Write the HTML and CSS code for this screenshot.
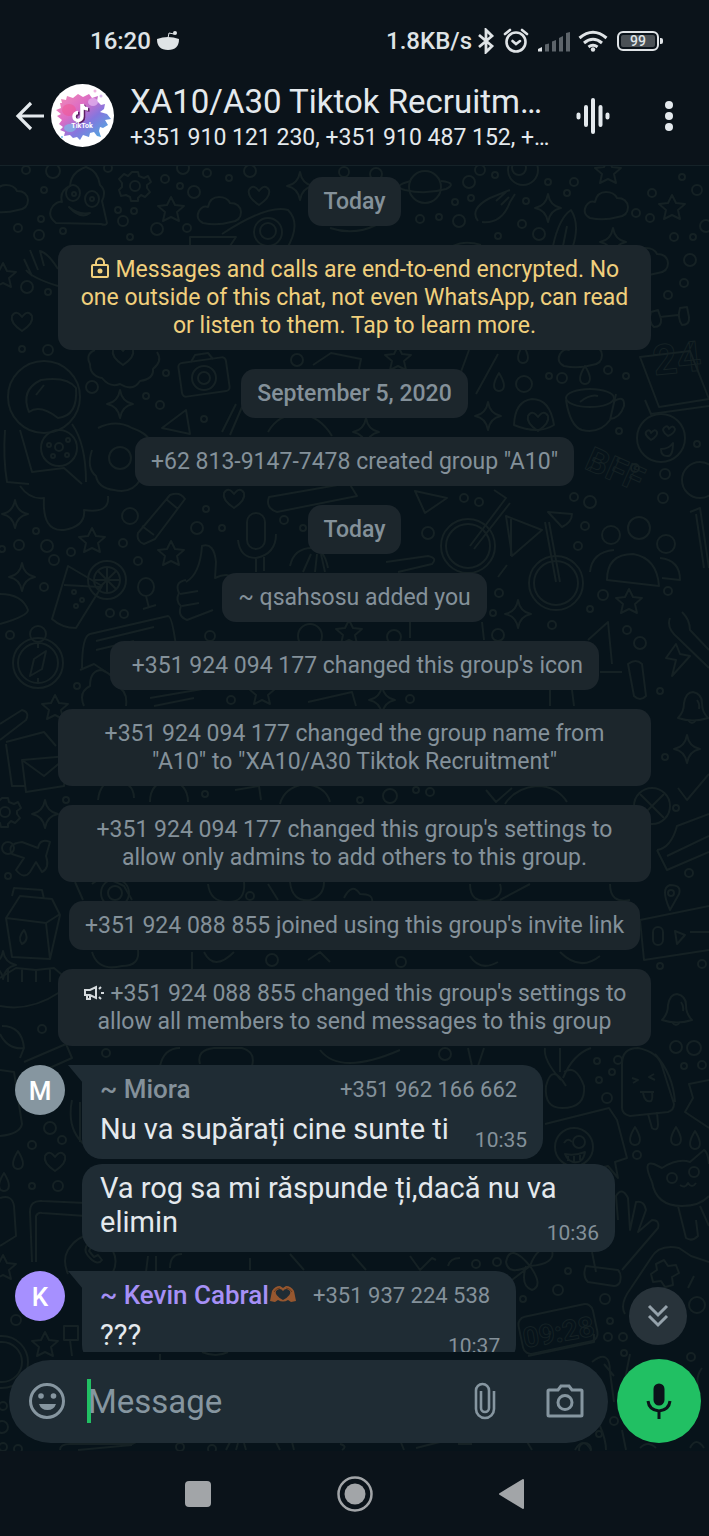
FILE: index.html
```html
<!DOCTYPE html>
<html lang="en">
<head>
    <meta charset="UTF-8">
    <meta name="viewport" content="width=device-width, initial-scale=1">
    <title>XA10/A30 Tiktok Recruitment</title>
    <link rel="stylesheet" href="styles.css">
</head>
<body>

<div class="status-bar">
    <span>16:20</span>
    <svg class="bowl" width="22" height="20" viewBox="0 0 22 20" aria-hidden="true">
        <path d="M0 8q11-4 22 0q0 11-11 11T0 8z" fill="currentColor"/>
        <path d="M11 7l1-5 5 1" fill="none" stroke="currentColor"/>
        <circle cx="18" cy="2" r="2" fill="currentColor"/>
    </svg>
    <span class="speed">1.8KB/s</span>
    <svg class="bluetooth" width="18" height="26" viewBox="0 0 18 26" fill="none" stroke="currentColor" stroke-width="2.8" aria-hidden="true">
        <path d="M2 7l13 11-6 6V2l6 6L2 19"/>
    </svg>
    <svg class="alarm" width="26" height="26" viewBox="0 0 26 26" fill="none" stroke="currentColor" stroke-width="2.6" stroke-linecap="round" aria-hidden="true">
        <circle cx="13" cy="14" r="9.5"/>
        <path d="M2 6l5-4M24 6l-5-4M9.500 13l3.500 3 4-3"/>
    </svg>
    <svg class="signal" width="32" height="21" viewBox="0 0 32 21" aria-hidden="true">
        <path d="M0 20.500v-2.500l4-2v4.500z" fill="currentColor"/>
        <path d="M7 20.500v-7l4-1v8zM14 20.500v-10l4-1.500v11.500zM21 20.500V7l4-2v15.500zM28 20.500V2l4-1v19.500z" fill="#5d646a"/>
    </svg>
    <svg class="wifi" width="30" height="22" viewBox="0 0 30 22" fill="none" stroke="currentColor" stroke-width="3" aria-hidden="true">
        <path d="M1.500 8Q15-3.500 28.500 8M6 13q9-7.500 18 0M10.500 17q4.500-3.500 9 0"/>
        <circle cx="15" cy="19.500" r="2.200" fill="currentColor" stroke="none"/>
    </svg>
    <span class="battery">99</span>
</div>

<header class="chat-header">
    <button class="icon-btn back" aria-label="Back">
        <svg width="30" height="30" viewBox="0 0 30 30" fill="none" stroke="currentColor" stroke-width="3.200"><path d="M29 15H3M16 2L3 15l13 13"/></svg>
    </button>
    <svg class="group-icon" width="63" height="63" viewBox="0 0 63 63" aria-hidden="true">
        <defs>
            <linearGradient id="splash" x1="0" y1="0" x2="1" y2="1">
                <stop offset="0" stop-color="#f58fb5"/>
                <stop offset=".35" stop-color="#dc6cc4"/>
                <stop offset=".6" stop-color="#8576de"/>
                <stop offset="1" stop-color="#3fbbe0"/>
            </linearGradient>
        </defs>
        <circle cx="31.500" cy="31.500" r="31.500" fill="#fff"/>
        <path d="M11 19l-1-4 5 1 1-4 6 2 5-4 5 3 6-3 3 4 6-2-1 5 4 4 4-1-1 5-4 3 7 2 4 5-6 1 3 5-5 3-3-1-1 4 2 6-4-1-3-4-4 1-1 4-6-2-3 5-3-3-4 1-3-3-6 1 1-4-5-2 3-3-4-3 3-4-5-4 4-2-5-4 5-2-1-5z" fill="url(#splash)"/>
        <ellipse cx="18" cy="26" rx="7" ry="6" fill="#f4528d" opacity=".5"/>
        <ellipse cx="42" cy="18" rx="5" ry="4" fill="#e6b8f2" opacity=".7"/>
        <ellipse cx="19" cy="44" rx="6" ry="4" fill="#7bbbe8" opacity=".7"/>
        <circle cx="44" cy="7" r="1.500" fill="#efb4e0"/>
        <circle cx="50" cy="12" r="1.500" fill="#d9b8f0"/>
        <circle cx="11" cy="53" r="1" fill="#74c4ea"/>
        <path d="M31 20v12.500a4 4 0 1 1-4-4M31 20q1 5 6 5" transform="translate(1.500 1)" fill="none" stroke="#5c1e63" stroke-width="3.500"/>
        <path d="M31 20v12.500a4 4 0 1 1-4-4M31 20q1 5 6 5" fill="none" stroke="#fff" stroke-width="3.500"/>
        <text x="31" y="44" class="icon-name">TikTok</text>
    </svg>
    <div class="chat-title">
        <h1>XA10/A30 Tiktok Recruitm…</h1>
        <p>+351 910 121 230, +351 910 487 152, +…</p>
    </div>
    <button class="icon-btn voice" aria-label="Voice chat">
        <svg width="34" height="38" viewBox="0 0 34 38" stroke="currentColor" stroke-width="4" stroke-linecap="round"><path d="M2.500 17.500v3M10 10v18M17 3v32M24.500 10v18M31.500 17.500v3"/></svg>
    </button>
    <button class="icon-btn menu" aria-label="More options">
        <svg width="8" height="30" viewBox="0 0 8 30" fill="currentColor"><circle cx="4" cy="4" r="4"/><circle cx="4" cy="15" r="4"/><circle cx="4" cy="26" r="4"/></svg>
    </button>
</header>

<main class="chat">
    <svg class="wallpaper" viewBox="0 166 709 1285" preserveAspectRatio="xMidYMin slice" aria-hidden="true">
        <defs>
            <path id="star" d="M0-12L4-4l9 1-7 6 2 9-8-4-8 4 2-9-7-6 9-1z"/>
            <path id="sparkle" d="M0-14Q2-2 13 0 2 2 0 14-2 2-13 0-2-2 0-14z"/>
            <path id="heart" d="M0 10Q-12 2-10-5-6-12 0-4 6-12 10-5 12 2 0 10z"/>
            <path id="cloud" d="M-16 12q-8-4-4-12 4-6 9-4 2-10 11-10 8 0 11 6 10 0 11 9 0 9-10 10-14 4-28 1z"/>
            <path id="drop" d="M0-9Q8 4 3 8q-3 2-6 0Q-8 4 0-9z"/>
            <g id="gear"><circle r="5"/><path d="M-3-14h6l1 4 5 2 4-2 3 6-4 3v3l3 4-5 5-4-2-3 3v3h-7l-1-4-4-2-5 1-2-6 3-3v-4l-3-4 5-5 4 2z"/></g>
            <g id="bell"><path d="M-14 10q6-6 6-15 2-11 9-11 9 2 9 11 0 9 6 15-15 5-30 0z"/><path d="M-4 12q4 6 8 0M5-8q3 4 2 9"/></g>
        </defs>

        <!-- food, clouds, planets -->
        <use href="#cloud" x="6" y="199"/><use href="#cloud" x="219" y="211"/><use href="#cloud" x="606" y="206"/><use href="#cloud" x="580" y="354"/>
        <use href="#cloud" x="646" y="262"/><use href="#gear" x="135" y="186"/><use href="#gear" x="5" y="812"/>
        <use href="#star" x="171" y="209"/><use href="#star" x="608" y="171"/><use href="#star" x="672" y="207"/><use href="#star" x="3" y="275"/>
        <use href="#star" x="92" y="540"/><use href="#star" x="171" y="553"/><use href="#star" x="629" y="601"/><use href="#star" x="349" y="632"/>
        <use href="#star" x="55" y="707"/><use href="#star" x="45" y="1344"/><use href="#star" x="3" y="1267"/><use href="#star" x="398" y="358"/><use href="#star" x="262" y="692"/>
        <use href="#sparkle" x="300" y="186"/><use href="#sparkle" x="548" y="208"/><use href="#sparkle" x="613" y="242"/><use href="#sparkle" x="120" y="404"/>
        <use href="#sparkle" x="488" y="416"/><use href="#sparkle" x="15" y="514"/><use href="#sparkle" x="22" y="577"/><use href="#sparkle" x="518" y="614"/>
        <use href="#sparkle" x="687" y="749"/><use href="#sparkle" x="45" y="814"/><use href="#sparkle" x="366" y="432"/><use href="#sparkle" x="382" y="700"/><use href="#sparkle" x="3" y="965"/>
        <use href="#heart" x="259" y="195"/><use href="#heart" x="22" y="321"/><use href="#heart" x="123" y="355"/><use href="#heart" x="234" y="498"/><use href="#heart" x="55" y="1161"/><use href="#heart" x="538" y="421"/>
        <use href="#drop" x="523" y="354"/><use href="#drop" x="499" y="382"/><use href="#drop" x="585" y="375"/><use href="#drop" x="635" y="1136"/>
        <use href="#drop" x="676" y="1136"/><use href="#drop" x="695" y="1140"/><use href="#drop" x="18" y="1160"/><use href="#drop" x="4" y="1182"/>
        <use href="#bell" x="692" y="708"/><use href="#bell" x="676" y="1010"/>

        <path d="M56 223q-10-8-3-17 5-5 9-4-3-11 8-16 1-14 16-19 12 4 14 18 7 6 2 16l5 22q-1 3-6 1z"/>
        <ellipse cx="73" cy="193" rx="7" ry="8"/><ellipse cx="92" cy="199" rx="7" ry="8"/><circle cx="74" cy="194" r="2"/><circle cx="92" cy="199" r="2"/><path d="M69 207q9 8 21 6-9 7-21-6z"/>
        <path d="M190 237h46l-8 12h-38zM222 234q46-30 66-24 14 14-2 40"/><circle cx="268" cy="232" r="14"/><circle cx="268" cy="231" r="8"/>
        <circle cx="425" cy="187" r="16"/><path d="M411 181q-20 5-6 9 20 5 41-1 12-6-5-8M330 228q24 8 46-3"/>
        <circle cx="523" cy="170" r="15"/><circle cx="519" cy="168" r="7"/><path d="M478 221q-9-12 12-23l20-8M482 222q20 2 28-20l5-8M496 201l10-9M501 205l8-8"/>
        <path d="M553 246q6-28 18-36 9 14 2 36M567 226l-4 20M453 246q12-6 28-1"/>
        <path d="M32 276l-8-17M38 270l-8-20M44 266l-4-15q8 2 18 18M26 270q6 8 32 16"/>
        <path d="M95 350q-10 4-5 14 0 12 12 14 8 10 18 6 13 8 20-3 14-2 13-12 10-8 4-17"/>
        <rect x="180" y="360" width="48" height="34" rx="4" transform="rotate(-8 204 377)"/><circle cx="204" cy="378" r="12"/><circle cx="204" cy="378" r="6"/><path d="M191 362l4-7 13-2 5 6"/>
        <circle cx="44" cy="397" r="36"/><path d="M29 412q-9-22 12-32 26-4 35 8 2 28-18 30-18-14-29-6zM36 395l8-10M5 430q-2 28 2 52l22 2M72 424q14 20 14 58M20 430l12 42 32-4 18 16"/>
        <circle cx="59" cy="448" r="18"/><circle cx="59" cy="447" r="4"/><circle cx="49" cy="445" r="2"/><circle cx="68" cy="440" r="2"/><circle cx="67" cy="455" r="2"/><circle cx="53" cy="456" r="2"/>
        <path d="M98 428q18-9 34 0 18 6 20 18M92 450q-6 18 4 26 2 12 18 14 18 4 26-10"/><circle cx="120" cy="458" r="11"/>
        <path d="M162 428l24-18 4 24zM222 432l14-28M230 435l12-28M268 432q10-18 32-18 20 2 32 22M313 365l18-12 30 6-2 10M476 394l22-40M455 388l14-38"/>
        <path d="M640 357l50-6 19 48-50 8zM645 400l6 14 58-8"/><text x="653" y="373" class="doodle-text" font-size="42" transform="rotate(-6 676 360)">24</text>
        <path d="M651 312q-3 10 3 15 8 0 7-8l-3-9zM660 317l18-2M680 308q-3 10 2 17 8 0 7-8l-2-10z"/>
        <ellipse cx="590" cy="398" rx="24" ry="9"/><path d="M566 400q4 26 16 30 18 4 28-10l6-26M613 402q12-8 11 4-4 12-14 13M580 402q10-8 18-6"/>
        <circle cx="661" cy="438" r="24"/><path d="M651 440q-8-6-4-9 3-2 4 2 4-5 6-1 1 4-6 8zM668 436q-8-6-3-9 3-2 4 2 4-5 6 0 0 4-7 7zM661 449q8 0 12-6 0 14-6 13-6 0-6-7zM514 425q1-24 18-26 18 0 22 26-16 10-40 0z"/>
        <text x="584" y="475" class="doodle-text" font-size="34" transform="rotate(24 600 470)">BFF</text><circle cx="700" cy="480" r="18"/>

        <!-- drinks, bike, people -->
        <path d="M138 533l32-38q10-4 15 4l-30 40-11 5q-8-3-6-11zM142 526l12 9M166 499l12 10M269 497l80-14 8 13-80 16q-12-4-8-15zM415 491l32 7-22 15zM20 486q10 14 24 12-2 34 20 32 22-4 20-20 26 4 24-14"/>
        <rect x="247" y="513" width="18" height="36" rx="9"/><path d="M238 540q2 18 18 18 20-4 20-24M256 558v14M264 557v14"/>
        <path d="M186 582q14-8 16-36 12-4 14 16l-1 16q12-6 20 0M186 580q-12 2-7 13-4 8 2 13-4 10 6 14l26-10M180 594l18-3M182 606l17-3"/>
        <path d="M68 566l34 20-26 42q-14 0-24-9zM64 585l36 2"/><circle cx="107" cy="580" r="19"/><circle cx="107" cy="580" r="13"/><path d="M107 567v26M94 580h26M98 571l18 18M116 571l-18 18"/><circle cx="74" cy="592" r="2"/><circle cx="82" cy="600" r="2"/><circle cx="76" cy="606" r="2"/>
        <ellipse cx="146" cy="587" rx="8" ry="9"/><path d="M146 596l3 12M143 609l13-4"/>
        <circle cx="468" cy="546" r="27"/><circle cx="468" cy="546" r="22"/><circle cx="556" cy="583" r="27"/><circle cx="556" cy="583" r="22"/>
        <path d="M470 546l36-48-12-8M474 549l36-46M506 516l36 14-30 26zM511 519v37M545 522l11 60M549 522l11 60M548 512l24 2q0 8-10 13zM507 565l-9 12M386 562l42-6q10 2 4 8l-34 8M290 566q4-18 22-18 12 0 16 20M303 572l8-18M315 572l2-18M325 572l-4-18"/>
        <circle cx="611" cy="535" r="9"/><circle cx="639" cy="528" r="11"/><circle cx="666" cy="544" r="9"/><path d="M607 580q0-26 26-26 24 4 26 32zM590 572q2-20 24-22M660 558q20 2 20 22l-18-2"/>
        <path d="M0 594q22 0 28 16 0 6-28 14M82 668q0-32 8-34l78-18q4 0 8 30M96 641l58-14M96 650l38-9M80 670l14-6 12 8"/>
        <circle cx="38" cy="663" r="25"/><circle cx="38" cy="663" r="20"/><circle cx="38" cy="634" r="8"/><path d="M46 651l-4 18-12 7 4-17zM38 643v5M38 678v5"/>
        <path d="M84 706q-6-14 6-20 0-16 12-16 14 6 14 16 12 4 10 20M150 698l70-12M154 706l40-8M308 702l44-10 4 14M410 622v16M482 622l2 18M588 640l20-18 4 42M628 664q8-6 14 0l4 32q-6 6-12 0zM550 690v16M572 690l2 16M600 672h22"/>
        <path d="M670 618q-4 10 8 20l31 30M682 612q8 8 8 18l19 20M676 644l-10 14 10 2-4 16 18-20-10-2zM690 512l10-4 9 60M696 514l8 54"/>
        <path d="M0 724l22-14q8 2 4 10L0 740M6 742l38-10 12 14M22 760l46-4-4 30-38 6zM22 760l22 16 24-20M6 744l6 42 14 0"/>
        <path d="M98 800q2-18 16-20 20 2 20 18M150 802q0-20 20-22 18 4 18 22M235 790l24-4 2 14M280 804q4-16 24-20 22 2 26 18M486 790l10 12 16-14M505 804q10-16 32-18 20 0 30 16"/>
        <circle cx="652" cy="806" r="18"/><path d="M640 794l24 24M664 794l-24 24M678 788l9 12 22-26"/>

        <!-- milk, shoe, ice cream -->
        <path d="M22 842q-16 2-10 12l12 4-8 12q8 10 14 2l6-10 6 10q8-4 4-16l4-14q-10-4-12 6z"/>
        <path d="M6 918l14-22 32 3 8 16-10 44-38-2zM6 918l40 5 14-9M46 923l4 36M12 896l2-8 28 2 2 9M24 930q6 10-2 14-5-6 2-14z"/>
        <path d="M657 850l10 20 42-18M657 850q14-2 20-24l32-12M667 856l42-20M670 910q-10-22 0-25 12 0 9 9zM640 920l69-14M640 920l4 40 65-10"/><circle cx="671" cy="893" r="3"/><rect x="653" y="927" width="10" height="18" rx="5"/><path d="M675 931l10 4-8 9zM690 932h19"/>
        <path d="M0 978l16-10 20 2 18-2 14 12M8 968v14M22 968v14M36 970v12M50 968v14M0 1006q30 6 60-14M2 1026q20 0 22 22l-4 10M24 1048q-16 2-24-14M24 1062l42-18 6 14-36 16"/>
        <path d="M75 882l8 18M92 884q10-10 32 2l8 14"/><circle cx="115" cy="893" r="14"/><circle cx="115" cy="893" r="7"/><path d="M208 884q2 18 20 18t16-20M268 884l10 16M290 882q2 20 20 18 14-4 14-18M344 898q8-16 16-4 14 0 12 8M470 884q0 20 20 16 14-4 10-16M500 900l30-16M610 884q0 20 20 16"/>
        <path d="M92 952q6 20 30 14 18 0 16-16M192 952v18M204 952q10 20 30 0M308 960l12-8 10 10M470 956q10 16 28 6M560 952q20 20 40 4"/>
        <path d="M160 1066q4-18 20-18M200 1064q-4-14 14-16h28q14 4 10 18M320 1050q20 26 80 0M468 1048l4 18M484 1048l-6 18M560 1048v24"/>
        <path d="M622 1064q0-16 16-16 20 4 24 18l12 38q0 6-6 8l-38 4q-8-2-8-8zM655 1054q18 20 20 48M648 1114l4 14q6 4 6-4l-1-12M632 1078l6 2-5 3M654 1074l-5 3 6 3M640 1092h14M643 1093q2 10 8 8 2-2 1-9"/>
        <path d="M561 1080q-18-20-16-32M563 1078q10-24 28-30M566 1086q-14-24-20 0-2 22 16 22 24 0 22-22-8-22-20-14"/>
        <path d="M545 1124l64-16 8 12 10 38-12 4 3 16-10-12-22 5M709 1080l-20 4 4 14-8 14 24 16"/><circle cx="574" cy="1147" r="19"/><circle cx="579" cy="1142" r="6"/><path d="M564 1143q4-6 8-1M565 1154q10 2 20-2-2 12-12 10-6-2-8-8zM568 1156v5M574 1156v6M580 1155v5"/>
        <path d="M652 1182q-10-22 2-18l8 4q16-10 28-6l14-12q4 2 5 14M652 1182q4 24 30 24 18 0 27-10M678 1206l8 32q6 4 12-2l-2-16M700 1206l9 20"/><circle cx="672" cy="1178" r="5"/><circle cx="694" cy="1172" r="5"/><path d="M680 1185q5 4 8-2 4 6 8 0"/>
        <path d="M618 1220l-2-24q6-10 12 2l2 32 6-28q8-2 10 8l-8 22 14-12q8 0 6 8l-36 42M592 1252l4 20M586 1266l32 4q4 4 2 12-2 4-6 4l-26-4q-6-6-2-16z"/>
        <path d="M625 1314q-6-10 6-26l20-30q8-14 28-10l12 8 18 6M656 1264l8-4 4 6 8-1 3 8-7 4 1 8-8 2-4-6-8 1-2-8 6-4zM688 1288l6-12"/>
        <path d="M530 1266q-20-24-24-4 2 14 24 4 8-22 22-16 4 14-22 16 14 20 2 24-12-4-6-24M512 1280l18-14"/>

        <!-- screens, clocks -->
        <path d="M0 1070l14 2 8 52q-2 10-22 12M72 1100q-6 30 14 46M80 1102v40M32 1262l-2-50q0-12 12-11l44 2M36 1262v-46q2-4 6-3l44 3M68 1274q-6-14 0-24 14-22 36-10 18 16 8 34M88 1244q-6 6 2 14 8 8 12 2l-4-5-4 2-5-6 2-4zM148 1256l-2 16M156 1256v16M170 1268q0-14 12-14M0 1198q12-4 14 8l2 30-16 10"/>
        <path d="M250 1258v12M290 1254l14 16M352 1254l14 16M410 1256l10 14 12-12 4 2M448 1266q2-8 12-8"/>
        <rect x="520" y="1310" width="76" height="38" rx="8" transform="rotate(-12 558 1329)"/><path d="M528 1356l66-14v-8"/><text x="522" y="1342" class="doodle-text" font-size="28" transform="rotate(-10 558 1330)">09:28</text>
        <circle cx="2" cy="1362" r="26"/><circle cx="2" cy="1362" r="20"/><path d="M64 1326h14v14H64zM70 1340l2 16M160 1354v8M202 1352q14 6 26 0M592 1362q18-14 18 10l4 30M630 1354l-6 30M604 1364l10 12M702 1368q-8 10-2 26"/>
        <path d="M60 1450q0-6 10-6h62l4-2M78 1450l54-5M226 1450l4-8M236 1450l2-7M246 1450l-2-7M276 1442l4 8M292 1442l2 8M340 1444q8 2 2 6M400 1440l4 10M416 1448l24-6M458 1444h14M526 1440l6 10M575 1450q8-14 16 0M600 1426q6 14 6 24M622 1430l4 20M640 1448q8-8 16 0M690 1448q6-12 14 0"/>

        <!-- loose bubbles -->
        <g>
            <circle cx="26" cy="170" r="4"/><circle cx="53" cy="171" r="7"/><circle cx="108" cy="168" r="4"/><circle cx="183" cy="168" r="6"/><circle cx="207" cy="173" r="4"/><circle cx="229" cy="178" r="3"/><circle cx="250" cy="171" r="6"/><circle cx="165" cy="179" r="4"/>
            <circle cx="180" cy="186" r="3"/><circle cx="194" cy="192" r="6"/><circle cx="44" cy="190" r="3"/><circle cx="118" cy="210" r="3"/><circle cx="134" cy="211" r="3"/><circle cx="123" cy="221" r="5"/><circle cx="157" cy="229" r="6"/><circle cx="187" cy="228" r="4"/>
            <circle cx="41" cy="219" r="3"/><circle cx="39" cy="235" r="5"/><circle cx="63" cy="231" r="3"/><circle cx="130" cy="237" r="3"/><circle cx="18" cy="228" r="4"/><circle cx="344" cy="172" r="5"/><circle cx="376" cy="174" r="6"/><circle cx="480" cy="170" r="5"/>
            <circle cx="495" cy="175" r="3"/><circle cx="469" cy="182" r="6"/><circle cx="548" cy="182" r="3"/><circle cx="574" cy="182" r="4"/><circle cx="567" cy="193" r="3"/><circle cx="455" cy="202" r="3"/><circle cx="471" cy="198" r="3"/><circle cx="526" cy="201" r="3"/>
            <circle cx="420" cy="219" r="4"/><circle cx="439" cy="217" r="3"/><circle cx="459" cy="221" r="6"/><circle cx="522" cy="224" r="4"/><circle cx="539" cy="234" r="6"/><circle cx="498" cy="236" r="3"/><circle cx="636" cy="213" r="4"/><circle cx="650" cy="218" r="4"/>
            <circle cx="652" cy="193" r="4"/><circle cx="697" cy="190" r="5"/><circle cx="682" cy="177" r="3"/><circle cx="706" cy="226" r="6"/><circle cx="674" cy="237" r="4"/><circle cx="693" cy="237" r="3"/><circle cx="690" cy="260" r="6"/><circle cx="684" cy="283" r="4"/>
            <circle cx="27" cy="287" r="6"/><circle cx="48" cy="292" r="3"/><circle cx="668" cy="295" r="4"/><circle cx="22" cy="349" r="3"/><circle cx="48" cy="350" r="5"/><circle cx="92" cy="387" r="6"/><circle cx="146" cy="396" r="3"/><circle cx="160" cy="405" r="4"/>
            <circle cx="166" cy="373" r="3"/><circle cx="297" cy="360" r="6"/><circle cx="524" cy="384" r="8"/><circle cx="549" cy="376" r="3"/><circle cx="562" cy="378" r="5"/><circle cx="608" cy="370" r="4"/><circle cx="626" cy="376" r="3"/><circle cx="204" cy="419" r="3"/>
            <circle cx="619" cy="431" r="3"/><circle cx="697" cy="444" r="3"/><circle cx="635" cy="468" r="4"/><circle cx="665" cy="474" r="5"/><circle cx="130" cy="516" r="8"/><circle cx="206" cy="509" r="3"/><circle cx="197" cy="528" r="6"/><circle cx="222" cy="528" r="3"/>
            <circle cx="284" cy="520" r="4"/><circle cx="303" cy="528" r="3"/><circle cx="464" cy="498" r="4"/><circle cx="479" cy="502" r="4"/><circle cx="428" cy="533" r="6"/><circle cx="574" cy="497" r="4"/><circle cx="590" cy="502" r="6"/><circle cx="663" cy="498" r="5"/>
            <circle cx="585" cy="526" r="4"/><circle cx="578" cy="546" r="4"/><circle cx="2" cy="549" r="3"/><circle cx="19" cy="545" r="5"/><circle cx="47" cy="546" r="6"/><circle cx="36" cy="531" r="3"/><circle cx="54" cy="560" r="5"/><circle cx="71" cy="552" r="4"/>
            <circle cx="123" cy="543" r="4"/><circle cx="138" cy="561" r="4"/><circle cx="44" cy="587" r="4"/><circle cx="110" cy="613" r="4"/><circle cx="124" cy="614" r="4"/><circle cx="10" cy="635" r="4"/><circle cx="499" cy="593" r="4"/><circle cx="493" cy="613" r="3"/>
            <circle cx="552" cy="625" r="4"/><circle cx="498" cy="635" r="6"/><circle cx="394" cy="637" r="7"/><circle cx="210" cy="636" r="5"/><circle cx="310" cy="636" r="12"/><circle cx="603" cy="595" r="5"/><circle cx="590" cy="609" r="3"/><circle cx="668" cy="591" r="4"/>
            <circle cx="627" cy="630" r="4"/><circle cx="640" cy="643" r="6"/><circle cx="77" cy="686" r="3"/><circle cx="231" cy="700" r="4"/><circle cx="410" cy="699" r="4"/><circle cx="660" cy="691" r="3"/><circle cx="665" cy="757" r="3"/><circle cx="205" cy="794" r="3"/>
            <circle cx="390" cy="796" r="7"/><circle cx="430" cy="792" r="4"/><circle cx="416" cy="790" r="3"/><circle cx="360" cy="800" r="3"/><circle cx="66" cy="800" r="3"/><circle cx="8" cy="848" r="6"/><circle cx="8" cy="876" r="3"/><circle cx="689" cy="873" r="4"/>
            <circle cx="676" cy="808" r="3"/><circle cx="250" cy="896" r="4"/><circle cx="272" cy="960" r="6"/><circle cx="401" cy="962" r="5"/><circle cx="702" cy="964" r="4"/><circle cx="660" cy="966" r="3"/><circle cx="676" cy="1047" r="6"/><circle cx="694" cy="1048" r="7"/>
            <circle cx="42" cy="1029" r="4"/><circle cx="106" cy="1053" r="4"/><circle cx="445" cy="1054" r="6"/><circle cx="597" cy="1061" r="3"/><circle cx="618" cy="1060" r="4"/><circle cx="612" cy="1072" r="3"/><circle cx="599" cy="1080" r="3"/><circle cx="607" cy="1098" r="5"/>
            <circle cx="684" cy="1066" r="3"/><circle cx="702" cy="1065" r="4"/><circle cx="637" cy="1155" r="4"/><circle cx="50" cy="1128" r="6"/><circle cx="62" cy="1140" r="4"/><circle cx="32" cy="1145" r="4"/><circle cx="32" cy="1186" r="3"/><circle cx="58" cy="1186" r="5"/>
            <circle cx="476" cy="1264" r="4"/><circle cx="497" cy="1262" r="4"/><circle cx="568" cy="1271" r="3"/><circle cx="558" cy="1290" r="5"/><circle cx="523" cy="1299" r="3"/><circle cx="605" cy="1299" r="5"/><circle cx="610" cy="1321" r="3"/><circle cx="608" cy="1337" r="4"/>
            <circle cx="623" cy="1337" r="4"/><circle cx="697" cy="1305" r="8"/><circle cx="16" cy="1320" r="5"/><circle cx="624" cy="1353" r="3"/><circle cx="691" cy="1357" r="4"/><circle cx="614" cy="1421" r="4"/><circle cx="599" cy="1434" r="3"/><circle cx="3" cy="1406" r="4"/>
            <circle cx="2" cy="1427" r="6"/><circle cx="3" cy="1447" r="4"/><circle cx="18" cy="1449" r="4"/><circle cx="180" cy="1447" r="4"/><circle cx="212" cy="1449" r="4"/><circle cx="585" cy="1449" r="6"/>
        </g>
    </svg>

    <div class="messages">
        <p class="notice date">Today</p>
        <p class="notice encryption">
            <svg width="20" height="22" viewBox="0 0 20 22" fill="none" stroke="currentColor" stroke-width="2" aria-hidden="true"><rect x="2" y="8" width="16" height="12" rx="1"/><path d="M6 8V5.500a4 4 0 0 1 8 0V8"/><circle cx="10" cy="14" r="1.500" fill="currentColor"/></svg>
            Messages and calls are end-to-end encrypted. No one outside of this chat, not even WhatsApp, can read or listen to them. Tap to learn more.
        </p>
        <p class="notice date">September 5, 2020</p>
        <p class="notice">+62 813-9147-7478 created group "A10"</p>
        <p class="notice date">Today</p>
        <p class="notice">~ qsahsosu added you</p>
        <p class="notice">&nbsp;+351 924 094 177 changed this group's icon</p>
        <p class="notice">+351 924 094 177 changed the group name from "A10"&nbsp;to "XA10/A30 Tiktok Recruitment"</p>
        <p class="notice">+351 924 094 177 changed this group's settings to allow only admins to add others to this group.</p>
        <p class="notice">+351 924 088 855 joined using this group's invite link</p>
        <p class="notice">
            <svg class="megaphone" width="22" height="16" viewBox="0 0 22 16" fill="none" stroke="currentColor" stroke-width="2" aria-hidden="true"><path d="M2 5h5l6-3v11l-6-3H2zM4 10v4h3v-4M16 4l2-2M18 8h3M16 12l2 2"/></svg>
            +351 924 088 855 changed this group's settings to allow all members to send messages to this group
        </p>

        <article class="message first">
            <span class="avatar grey">M</span>
            <header>
                <strong>~ Miora</strong>
                <span class="phone">+351 962 166 662</span>
            </header>
            <div class="body">
                <p>Nu va supărați cine sunte ti</p>
                <time>10:35</time>
            </div>
        </article>

        <article class="message">
            <div class="body">
                <p>Va rog sa mi răspunde ți,dacă nu va elimin</p>
                <time>10:36</time>
            </div>
        </article>

        <article class="message first">
            <span class="avatar purple">K</span>
            <header>
                <strong class="purple-name">~ Kevin Cabral<svg width="28" height="20" viewBox="0 0 28 20" aria-hidden="true"><path d="M1 17l2-10q3-5 8-5l3 2 3-2q5 0 8 5l2 10-5 1-3-2q-5 3-10 0l-3 2z" fill="#96572f"/><path d="M14 16Q5 11 7 7q4-4 7 0 3-4 7 0 2 4-7 9z" fill="#1f2c34"/><path d="M5 8q2-4 6-4M23 8q-2-4-6-4" fill="none" stroke="#6b3b1c"/></svg></strong>
                <span class="phone">+351 937 224 538</span>
            </header>
            <div class="body">
                <p>???</p>
                <time>10:37</time>
            </div>
        </article>
    </div>

    <button class="scroll-down" aria-label="Scroll to latest">
        <svg width="22" height="24" viewBox="0 0 22 24" fill="none" stroke="currentColor" stroke-width="3"><path d="M2 2l9 9 9-9M2 12l9 9 9-9"/></svg>
    </button>

    <form class="composer">
        <div class="field">
            <button type="button" class="icon-btn" aria-label="Emoji">
                <svg width="38" height="38" viewBox="0 0 38 38" fill="currentColor"><circle cx="19" cy="19" r="16.500" fill="none" stroke="currentColor" stroke-width="3"/><circle cx="13" cy="14" r="2.800"/><circle cx="25.500" cy="14" r="2.800"/><path d="M11 22h17q-2 6-8.500 6T11 22z"/></svg>
            </button>
            <span class="caret"></span>
            <input type="text" placeholder="Message" aria-label="Message">
            <button type="button" class="icon-btn attach" aria-label="Attach">
                <svg width="22" height="38" viewBox="0 0 22 38" fill="none" stroke="currentColor" stroke-width="2.600"><path d="M20 9v18a9 9 0 0 1-18 0V8.500a6.500 6.500 0 0 1 13 0V26a4 4 0 0 1-8 0V9"/></svg>
            </button>
            <button type="button" class="icon-btn" aria-label="Camera">
                <svg width="38" height="34" viewBox="0 0 38 34" fill="none" stroke="currentColor" stroke-width="3"><path d="M3 6h9l3-4h8l3 4h9q1 0 1 1v24q0 1-1 1H3q-1 0-1-1V7q0-1 1-1z"/><circle cx="19" cy="18.500" r="7"/></svg>
            </button>
        </div>
        <button type="button" class="mic" aria-label="Record voice message">
            <svg width="26" height="36" viewBox="0 0 26 36" fill="none" stroke="currentColor" stroke-width="3"><rect x="9" y="2" width="8" height="19" rx="4" fill="currentColor"/><path d="M2 18q1 9 11 10 10-1 11-10M13 28v8"/></svg>
        </button>
    </form>
</main>

<nav class="system-nav">
    <button class="icon-btn" aria-label="Recent apps"><svg width="36" height="36" viewBox="0 0 36 36" fill="currentColor"><rect x="5" y="5" width="26" height="26" rx="4"/></svg></button>
    <button class="icon-btn" aria-label="Home"><svg width="36" height="36" viewBox="0 0 36 36" fill="currentColor"><circle cx="18" cy="18" r="16.500" fill="none" stroke="currentColor" stroke-width="2.500"/><circle cx="18" cy="18" r="10.500"/></svg></button>
    <button class="icon-btn" aria-label="Back"><svg width="36" height="36" viewBox="0 0 36 36" fill="currentColor" stroke="currentColor" stroke-width="2" stroke-linejoin="round"><path d="M6 18L29 4v28z"/></svg></button>
</nav>

</body>
</html>
```
FILE: styles.css
```css
* { box-sizing: border-box; }
body { margin: 0; height: 100vh; display: flex; flex-direction: column; background: #0b131a; color: #e4e9ed; font-family: Roboto, "Liberation Sans", sans-serif; }
h1, p { margin: 0; font-weight: 400; }
svg { flex: none; }
button { border: 0; padding: 0; cursor: pointer; font: inherit; }
.icon-btn { display: flex; background: none; color: inherit; }

.status-bar { flex: none; display: flex; align-items: center; height: 66px; padding: 16px 50px 0 90px; font-size: 24px; font-weight: 500; color: #dfe3e6; }
.bowl { margin-left: 6px; }
.speed { margin-left: auto; }
.bluetooth { margin-left: 5px; }
.alarm { margin-left: 8px; }
.signal { margin-left: 9px; }
.wifi { margin-left: 8px; }
.battery { position: relative; margin-left: 9px; width: 42px; height: 20px; border: 2px solid #dfe3e6; border-radius: 6px; background: #4a5055; box-shadow: inset 0 0 0 2px #0b131a; font-size: 14px; line-height: 16px; text-align: center; }
.battery::after { content: ""; position: absolute; right: -6px; top: 5px; width: 3px; height: 6px; border-radius: 0 2px 2px 0; background: #dfe3e6; }

.chat-header { flex: none; display: flex; align-items: center; height: 100px; padding: 0 36px 0 15px; border-bottom: 1px solid #152228; }
.group-icon { margin-left: 6px; }
.icon-name { font-size: 7px; font-weight: 700; fill: #fff; text-anchor: middle; }
.chat-title { flex: 1; min-width: 0; margin: 4px 16px 0; }
.chat-title h1, .chat-title p { overflow: hidden; white-space: nowrap; text-overflow: ellipsis; }
.chat-title h1 { font-size: 33px; line-height: 40px; }
.chat-title p { font-size: 23px; line-height: 32px; }
.menu { margin-left: 55px; }

.chat { position: relative; flex: 1; min-height: 0; display: flex; flex-direction: column; background: #07131a; overflow: hidden; }
.wallpaper { position: absolute; top: 0; left: 0; width: 100%; height: 100%; fill: none; stroke: #152124; stroke-width: 2; stroke-linejoin: round; }
.doodle-text { font-weight: 700; stroke-width: 1; }

.messages { position: relative; flex: 1; min-height: 0; overflow-y: auto; scrollbar-width: none; display: flex; flex-direction: column; align-items: center; padding: 11px 58px 0; }
.notice { flex: none; max-width: 100%; margin-bottom: 19px; padding: 11px 16px 10px; border-radius: 14px; background: #1c262c; color: #84919a; font-size: 23px; line-height: 28px; text-align: center; }
.date { font-weight: 500; }
.encryption { color: #f0cf7c; }
.notice svg { vertical-align: -2px; }
.notice .megaphone { color: #d5dadd; vertical-align: 0; }

.message { position: relative; flex: none; align-self: flex-start; max-width: calc(100% - 60px); margin-left: 24px; margin-bottom: 19px; padding: 7px 16px 6px 18px; border-radius: 20px; background: #1f2c34; }
.message:has(+ .message:not(.first)) { margin-bottom: 5px; }
.message.first { border-top-left-radius: 0; }
.message.first::before { content: ""; position: absolute; left: -14px; top: 0; width: 15px; height: 18px; background: #1f2c34; clip-path: polygon(0 0, 100% 0, 100% 100%); }
.message header { display: flex; justify-content: space-between; align-items: center; gap: 16px; padding-right: 10px; height: 34px; margin-bottom: 6px; color: #84919a; }
.message strong { font-size: 26px; font-weight: 500; white-space: nowrap; }
.purple-name { color: #a690f6; }
.phone { font-size: 22px; white-space: nowrap; }
.message .body { display: flow-root; font-size: 29px; line-height: 34px; }
.message .body p { display: inline; }
.message time { float: right; margin: 15px 0 0 26px; font-size: 21px; line-height: 26px; color: #84919a; }
.avatar { position: absolute; left: -67px; top: 0; width: 50px; height: 50px; border-radius: 50%; color: #fff; font-size: 26px; font-weight: 500; line-height: 52px; text-align: center; }
.grey { background: #8696a0; }
.purple { background: #a690ff; }

.scroll-down { position: absolute; right: 22px; bottom: 106px; width: 58px; height: 58px; display: flex; align-items: center; justify-content: center; border-radius: 50%; background: #28333a; color: #95a2ab; }

.composer { position: relative; flex: none; display: flex; align-items: center; gap: 9px; padding: 7px 8px 8px 9px; }
.field { flex: 1; min-width: 0; display: flex; align-items: center; height: 83px; padding: 0 24px 0 19px; border-radius: 42px; background: #1f2c34; color: #8696a0; }
.caret { width: 4px; height: 44px; margin-left: 21px; background: #21c063; }
.field input { flex: 1; min-width: 0; margin: 0 0 0 -3px; padding: 0; border: 0; outline: 0; background: none; color: #e4e9ed; font: 33px Roboto, "Liberation Sans", sans-serif; }
.field input::placeholder { color: #8696a0; opacity: 1; }
.attach { margin-right: 50px; }
.mic { flex: none; display: flex; align-items: center; justify-content: center; width: 84px; height: 84px; border-radius: 50%; background: #21c063; color: #0b131a; }

.system-nav { flex: none; display: flex; justify-content: center; align-items: center; gap: 121px; height: 85px; color: #a2a5a8; }
```
